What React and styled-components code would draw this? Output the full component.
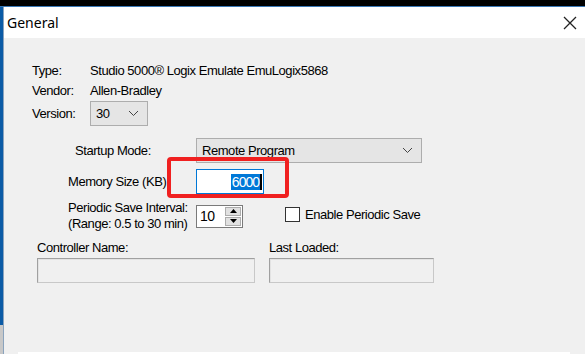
import React from 'react';
import styled, { createGlobalStyle } from 'styled-components';

const GlobalStyle = createGlobalStyle`
  html, body {
    margin: 0;
    padding: 0;
    background: #f0f0f0;
  }
  * {
    box-sizing: border-box;
  }
`;

const ChevronDown = () => (
  <svg width="11" height="7" viewBox="0 0 11 7">
    <path d="M1 1 L5.5 5.5 L10 1" fill="none" stroke="#444" strokeWidth="1" />
  </svg>
);

const CloseIcon = () => (
  <svg width="14" height="14" viewBox="0 0 14 14">
    <path d="M1 1 L13 13 M13 1 L1 13" stroke="#222" strokeWidth="1.3" />
  </svg>
);

const App = () => {
  return (
    <Window>
      <GlobalStyle />
      <TopBar />
      <Frame>
        <LeftEdge />
        <Dialog>
          <TitleBar>
            <span>General</span>
            <CloseButton>
              <CloseIcon />
            </CloseButton>
          </TitleBar>
          <Body>
            <InfoGrid>
              <Label>Type:</Label>
              <Label>Studio 5000® Logix Emulate EmuLogix5868</Label>
              <Label>Vendor:</Label>
              <Label>Allen-Bradley</Label>
              <Label>Version:</Label>
              <Combo width={58}>
                <span>30</span>
                <ChevronDown />
              </Combo>
            </InfoGrid>

            <FormGrid>
              <Label indent={7}>Startup Mode:</Label>
              <Combo width={226}>
                <span>Remote Program</span>
                <ChevronDown />
              </Combo>

              <Label>Memory Size (KB):</Label>
              <MemoryCell>
                <TextInput>
                  <Selected>6000</Selected>
                  <Caret />
                </TextInput>
                <Highlight />
              </MemoryCell>

              <TwoLineLabel>
                Periodic Save Interval:
                <br />
                (Range: 0.5 to 30 min)
              </TwoLineLabel>
              <SaveRow>
                <Spinner>
                  <SpinValue>10</SpinValue>
                  <SpinButtons>
                    <SpinButton>
                      <svg width="7" height="4" viewBox="0 0 7 4">
                        <path d="M0 4 L3.5 0 L7 4 Z" fill="#000" />
                      </svg>
                    </SpinButton>
                    <SpinButton>
                      <svg width="7" height="4" viewBox="0 0 7 4">
                        <path d="M0 0 L3.5 4 L7 0 Z" fill="#000" />
                      </svg>
                    </SpinButton>
                  </SpinButtons>
                </Spinner>
                <CheckLabel>
                  <CheckBox />
                  Enable Periodic Save
                </CheckLabel>
              </SaveRow>
            </FormGrid>

            <BottomFields>
              <Field width={218}>
                <Label>Controller Name:</Label>
                <ReadOnlyBox />
              </Field>
              <Field width={165}>
                <Label>Last Loaded:</Label>
                <ReadOnlyBox />
              </Field>
            </BottomFields>
          </Body>
          <FooterLine />
        </Dialog>
      </Frame>
    </Window>
  );
};

export default App;

const Window = styled.div`
  width: 585px;
  height: 354px;
  display: flex;
  flex-direction: column;
  background: #f0f0f0;
  overflow: hidden;
  font-family: 'Liberation Sans', Arial, sans-serif;
  font-size: 13px;
  letter-spacing: -0.45px;
  color: #000;
`;

const TopBar = styled.div`
  height: 7px;
  flex: none;
  background: #000;
  border-bottom: 1px solid #3a78b5;
`;

const Frame = styled.div`
  flex: 1;
  display: flex;
  min-height: 0;
`;

const LeftEdge = styled.div`
  width: 4px;
  flex: none;
  background: linear-gradient(to bottom, #0b5ba6 0, #0b5ba6 318px, #c8c8c8 318px);
  border-right: 1px solid #8aa3bd;
`;

const Dialog = styled.div`
  flex: 1;
  display: flex;
  flex-direction: column;
  min-width: 0;
`;

const TitleBar = styled.div`
  height: 31px;
  flex: none;
  background: #fff;
  display: flex;
  align-items: center;
  justify-content: space-between;
  padding: 0 8px 0 3px;
  font-family: 'Noto Sans', 'Open Sans', sans-serif;
  font-size: 14px;
  letter-spacing: 0;
  color: #000;
`;

const CloseButton = styled.div`
  display: flex;
  align-items: center;
  justify-content: center;
  width: 14px;
  height: 14px;
`;

const Body = styled.div`
  flex: 1;
  padding: 22px 0 0 28px;
  display: flex;
  flex-direction: column;
`;

const Label = styled.span`
  white-space: nowrap;
  line-height: 16px;
  margin-left: ${(p) => (p.indent ? `${p.indent}px` : '0')};
`;

const InfoGrid = styled.div`
  display: grid;
  grid-template-columns: 58px auto;
  grid-template-rows: 21px 20px 25px;
  align-items: center;
  justify-items: start;
`;

const Combo = styled.div`
  width: ${(p) => p.width}px;
  height: 25px;
  border: 1px solid #adadad;
  background: #e5e5e5;
  display: flex;
  align-items: center;
  justify-content: space-between;
  padding: 0 8px 0 5px;
`;

const FormGrid = styled.div`
  margin-top: 12px;
  margin-left: 36px;
  display: grid;
  grid-template-columns: 128px auto;
  grid-template-rows: 25px 25px 32px;
  row-gap: 6px;
  align-items: center;
  justify-items: start;
`;

const MemoryCell = styled.div`
  position: relative;
`;

const TextInput = styled.div`
  width: 68px;
  height: 25px;
  background: #fff;
  border: 1px solid #0078d7;
  display: flex;
  align-items: center;
  justify-content: flex-end;
  padding-right: 1px;
`;

const Selected = styled.span`
  background: #0078d7;
  color: #fff;
  font-size: 14px;
  line-height: 16px;
  letter-spacing: -1px;
  padding: 0 1px 0 1px;
`;

const Caret = styled.span`
  width: 2px;
  height: 16px;
  background: #000;
`;

const Highlight = styled.div`
  position: absolute;
  left: -29px;
  top: -12px;
  width: 122px;
  height: 41px;
  border: 4px solid #f02020;
  border-radius: 4px;
  pointer-events: none;
`;

const TwoLineLabel = styled.span`
  line-height: 16px;
  white-space: nowrap;
`;

const SaveRow = styled.div`
  display: flex;
  align-items: center;
  gap: 42px;
`;

const Spinner = styled.div`
  width: 47px;
  height: 23px;
  display: flex;
  background: #fff;
  border: 1px solid #7a7a7a;
`;

const SpinValue = styled.span`
  flex: 1;
  display: flex;
  align-items: center;
  padding-left: 3px;
  font-size: 14px;
`;

const SpinButtons = styled.div`
  width: 17px;
  display: flex;
  flex-direction: column;
  gap: 1px;
  padding: 1px 1px 1px 0;
`;

const SpinButton = styled.div`
  flex: 1;
  background: #e1e1e1;
  border: 1px solid #adadad;
  display: flex;
  align-items: center;
  justify-content: center;
`;

const CheckLabel = styled.label`
  display: flex;
  align-items: center;
  gap: 5px;
  white-space: nowrap;
  margin-top: -4px;
`;

const CheckBox = styled.span`
  width: 15px;
  height: 15px;
  background: #fff;
  border: 1px solid #333;
`;

const BottomFields = styled.div`
  margin-top: 8px;
  margin-left: 5px;
  display: flex;
  gap: 14px;
`;

const Field = styled.div`
  width: ${(p) => p.width}px;
  display: flex;
  flex-direction: column;
  gap: 2px;
`;

const ReadOnlyBox = styled.div`
  height: 25px;
  border: 1px solid #a0a0a0;
  border-right-color: #c8c8c8;
  border-bottom-color: #c8c8c8;
  background: #f0f0f0;
  box-shadow: inset 1px 1px 0 #e3e3e3;
`;

const FooterLine = styled.div`
  height: 2px;
  flex: none;
  margin: 0 15px 0 14px;
  background: #fff;
`;
